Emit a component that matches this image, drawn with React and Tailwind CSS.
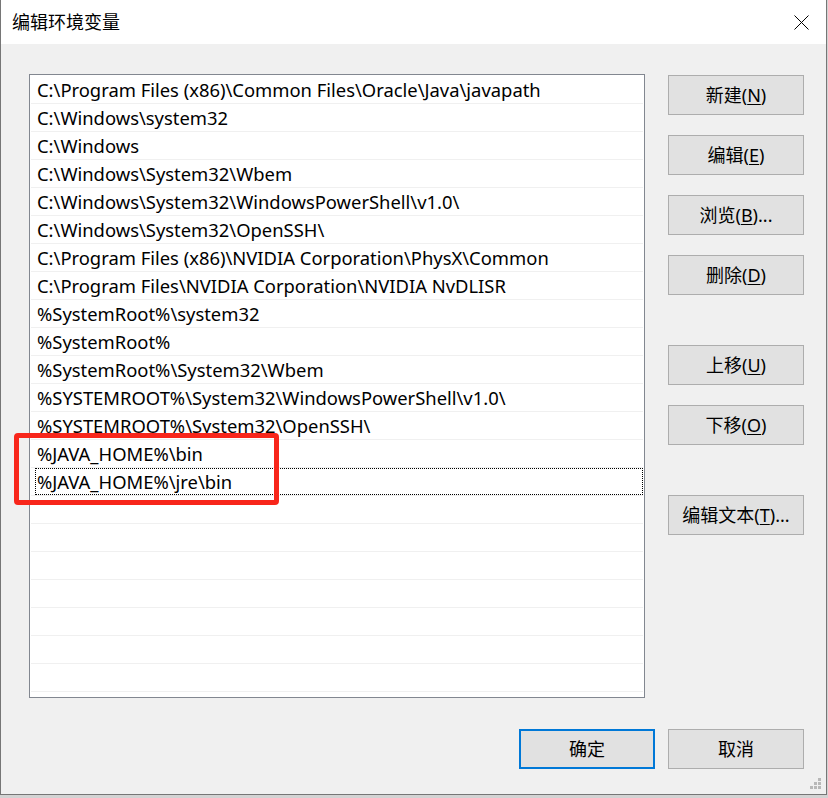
import React from 'react';

const paths = [
  'C:\\Program Files (x86)\\Common Files\\Oracle\\Java\\javapath',
  'C:\\Windows\\system32',
  'C:\\Windows',
  'C:\\Windows\\System32\\Wbem',
  'C:\\Windows\\System32\\WindowsPowerShell\\v1.0\\',
  'C:\\Windows\\System32\\OpenSSH\\',
  'C:\\Program Files (x86)\\NVIDIA Corporation\\PhysX\\Common',
  'C:\\Program Files\\NVIDIA Corporation\\NVIDIA NvDLISR',
  '%SystemRoot%\\system32',
  '%SystemRoot%',
  '%SystemRoot%\\System32\\Wbem',
  '%SYSTEMROOT%\\System32\\WindowsPowerShell\\v1.0\\',
  '%SYSTEMROOT%\\System32\\OpenSSH\\',
  '%JAVA_HOME%\\bin',
  '%JAVA_HOME%\\jre\\bin',
];

const rows = [...paths, ...Array(22 - paths.length).fill('')];
const font = { fontFamily: '"Noto Sans", "Noto Sans CJK SC", sans-serif' };

// label with one underlined mnemonic key
const Btn = ({ label, hot, tail = '', primary, className = '' }) => (
  <button
    className={`w-[136px] h-[40px] bg-[#e1e1e1] text-[18px] text-black flex items-center justify-center leading-none ${
      primary ? 'border-2 border-[#0078d7]' : 'border border-[#adadad]'
    } ${className}`}
  >
    <span>
      {label}
      {hot && (
        <>
          (<span className="underline underline-offset-2">{hot}</span>)
        </>
      )}
      {tail}
    </span>
  </button>
);

export default function App() {
  return (
    <div className="w-[828px] h-[798px] bg-[#d3d3d3] relative overflow-hidden" style={font}>
      <div className="w-[827px] h-[795px] border-l border-r border-b border-[#767676] flex flex-col">
        {/* title bar */}
        <div className="h-[44px] bg-white flex items-center justify-between pl-[11px] pr-[17px]">
          <span className="text-[18px] text-black">编辑环境变量</span>
          <svg width="15" height="15" viewBox="0 0 15 15">
            <path d="M0.5 0.5L14.5 14.5M14.5 0.5L0.5 14.5" stroke="#000" strokeWidth="1" />
          </svg>
        </div>

        {/* body */}
        <div className="flex-1 bg-[#f0f0f0] pl-[28px] pt-[30px] pr-[22px] flex flex-col relative">
          <div className="flex">
            <div className="w-[616px] h-[624px] border border-[#828790] bg-white p-[1px] overflow-hidden">
              {rows.map((p, i) => (
                <div key={i} className="h-[28px] border-b border-[#f0f0f0] flex">
                  {i === 14 ? (
                    <div className="flex-1 ml-[4px] border border-dotted border-black pl-[1px] pt-[1px] flex items-center text-[18.4px] text-black whitespace-nowrap">
                      {p}
                    </div>
                  ) : (
                    <div className="flex-1 pl-[6px] pt-[1px] flex items-center text-[18.4px] text-black whitespace-nowrap">
                      {p}
                    </div>
                  )}
                </div>
              ))}
            </div>

            <div className="ml-[23px] pt-[1px] flex flex-col">
              <Btn label="新建" hot="N" />
              <Btn label="编辑" hot="E" className="mt-[20px]" />
              <Btn label="浏览" hot="B" tail="..." className="mt-[20px]" />
              <Btn label="删除" hot="D" className="mt-[20px]" />
              <Btn label="上移" hot="U" className="mt-[50px]" />
              <Btn label="下移" hot="O" className="mt-[20px]" />
              <Btn label="编辑文本" hot="T" tail="..." className="mt-[50px]" />
            </div>
          </div>

          <div className="flex justify-end gap-[13px] mt-[31px]">
            <Btn label="确定" primary />
            <Btn label="取消" />
          </div>

          {/* size grip */}
          <svg className="absolute right-[4px] bottom-[4px]" width="12" height="12" viewBox="0 0 12 12" fill="#b8b8b8">
            <rect x="8" y="0" width="3" height="3" />
            <rect x="4" y="4" width="3" height="3" />
            <rect x="8" y="4" width="3" height="3" />
            <rect x="0" y="8" width="3" height="3" />
            <rect x="4" y="8" width="3" height="3" />
            <rect x="8" y="8" width="3" height="3" />
          </svg>
        </div>
      </div>

      {/* red annotation box */}
      <div className="absolute left-[14px] top-[433px] w-[265px] h-[72px] border-[5px] border-[#f8261b] rounded-[4px]" />
    </div>
  );
}
